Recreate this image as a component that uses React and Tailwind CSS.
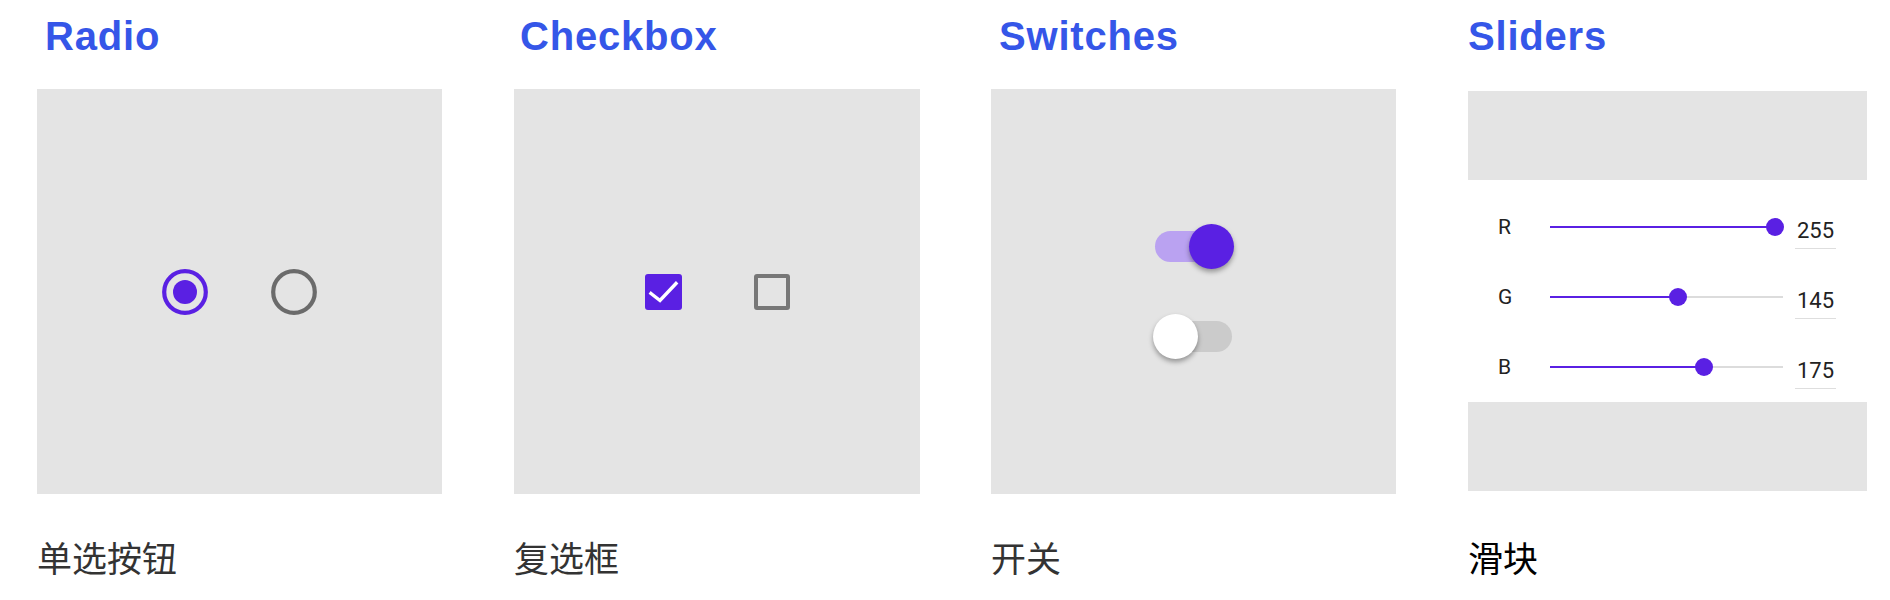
import React from "react";

const titleCls =
  "text-[40px] leading-none font-bold text-[#3556e8] tracking-[0.8px] [font-family:'Liberation_Sans',Arial,sans-serif]";
const labelCls =
  "text-[35px] leading-none [font-family:'Noto_Sans_CJK_SC','Noto_Sans',sans-serif]";

function RadioPanel() {
  return (
    <div className="w-[405px] h-[405px] bg-[#e4e4e4] flex items-center justify-center gap-[63px]">
      <svg width="46" height="46" viewBox="0 0 46 46">
        <circle cx="23" cy="23" r="20.8" fill="none" stroke="#5a20e3" strokeWidth="4.2" />
        <circle cx="23" cy="23" r="12" fill="#5a20e3" />
      </svg>
      <svg width="46" height="46" viewBox="0 0 46 46">
        <circle cx="23" cy="23" r="20.8" fill="none" stroke="#6b6b6b" strokeWidth="4.2" />
      </svg>
    </div>
  );
}

function CheckboxPanel() {
  return (
    <div className="w-[406px] h-[405px] bg-[#e4e4e4] flex items-center justify-center gap-[72px]">
      <div className="w-[37px] h-[36px] rounded-[3px] bg-[#5a20e3] flex items-center justify-center">
        <svg width="37" height="36" viewBox="0 0 37 36">
          <path d="M6 19.5 L15 26.5 L31 9.5" fill="none" stroke="#ffffff" strokeWidth="3.4" strokeLinecap="square" strokeLinejoin="miter" />
        </svg>
      </div>
      <div className="w-[36px] h-[36px] rounded-[3px] border-[4px] border-[#777777]" />
    </div>
  );
}

function Switch({ on }) {
  return (
    <div className={`relative w-[81px] h-[45px] flex items-center ${on ? "justify-end" : "justify-start"}`}>
      <div
        className={`absolute left-[2px] right-[2px] top-[7px] h-[31px] rounded-full ${
          on ? "bg-[#baa2f1]" : "bg-[#cbcbcb]"
        }`}
      />
      <div
        className={`relative w-[45px] h-[45px] rounded-full shadow-[0_3px_5px_rgba(0,0,0,0.35)] ${
          on ? "bg-[#5a20e3]" : "bg-white"
        }`}
      />
    </div>
  );
}

function SwitchPanel() {
  return (
    <div className="w-[405px] h-[405px] bg-[#e4e4e4] flex flex-col items-center justify-center gap-[45px]">
      <Switch on />
      <Switch on={false} />
    </div>
  );
}

function SliderRow({ label, value }) {
  const pos = (value / 255) * 225;
  return (
    <div className="h-[70px] flex items-center pl-[30px] [font-family:Roboto,'Liberation_Sans',sans-serif]">
      <div className="w-[52px] text-[21px] leading-none text-[#222]">{label}</div>
      <div className="relative w-[233px] h-[2.5px] bg-[#dcdcdc]">
        <div className="absolute left-0 top-0 h-full bg-[#5a20e3]" style={{ width: pos }} />
        <div
          className="absolute top-1/2 w-[18px] h-[18px] -translate-x-1/2 -translate-y-1/2 rounded-full bg-[#5a20e3]"
          style={{ left: pos }}
        />
      </div>
      <div className="ml-[12px] w-[41px] mt-[13px] pb-[5px] border-b border-[#dedede] text-center text-[22px] leading-[25px] text-[#222]">
        {value}
      </div>
    </div>
  );
}

function SliderPanel() {
  return (
    <div className="w-[399px] h-[400px] flex flex-col">
      <div className="h-[89px] bg-[#e4e4e4]" />
      <div className="h-[222px] bg-white pt-[12px]">
        <SliderRow label="R" value={255} />
        <SliderRow label="G" value={145} />
        <SliderRow label="B" value={175} />
      </div>
      <div className="h-[89px] bg-[#e4e4e4]" />
    </div>
  );
}

function Column({ title, titlePad, panel, label, labelCls2, panelMt, labelMt }) {
  return (
    <div className="w-[405px] flex flex-col">
      <div className={`${titlePad} mt-[16px] ${titleCls}`}>{title}</div>
      <div className={panelMt}>{panel}</div>
      <div className={`${labelMt} ${labelCls} ${labelCls2}`}>{label}</div>
    </div>
  );
}

export default function App() {
  return (
    <div className="w-[1890px] h-[600px] bg-white flex gap-[72px] pl-[37px]">
      <Column
        title="Radio"
        titlePad="pl-[8px]"
        panelMt="mt-[33px]"
        panel={<RadioPanel />}
        label="单选按钮"
        labelCls2="text-[#333]"
        labelMt="mt-[45px]"
      />
      <Column
        title="Checkbox"
        titlePad="pl-[6px]"
        panelMt="mt-[33px]"
        panel={<CheckboxPanel />}
        label="复选框"
        labelCls2="text-[#333]"
        labelMt="mt-[45px]"
      />
      <Column
        title="Switches"
        titlePad="pl-[8px]"
        panelMt="mt-[33px]"
        panel={<SwitchPanel />}
        label="开关"
        labelCls2="text-[#333]"
        labelMt="mt-[45px]"
      />
      <Column
        title="Sliders"
        titlePad="pl-[0px]"
        panelMt="mt-[35px]"
        panel={<SliderPanel />}
        label="滑块"
        labelCls2="text-black"
        labelMt="mt-[48px]"
      />
    </div>
  );
}
